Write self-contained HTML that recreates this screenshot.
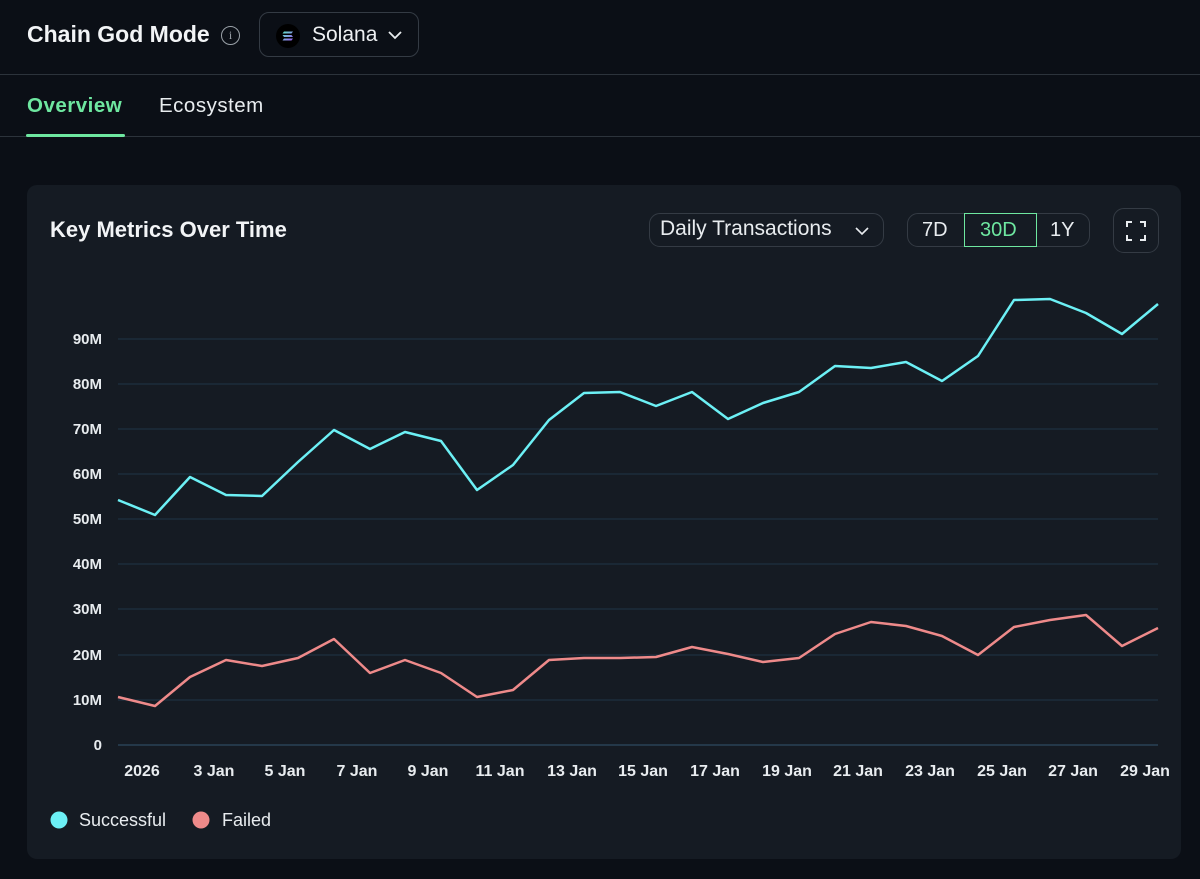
<!DOCTYPE html>
<html><head><meta charset="utf-8"><style>
*{margin:0;padding:0;box-sizing:border-box}
body{width:1200px;height:879px;background:#0b0f16;font-family:"Liberation Sans",sans-serif;color:#e8ecef;position:relative;overflow:hidden}
.abs{position:absolute}
.title{left:27px;top:21px;font-size:23px;font-weight:bold;color:#f2f4f6}
.info{left:221px;top:26px;width:19px;height:19px;border:1.5px solid #9aa1a8;border-radius:50%;color:#9aa1a8;font-size:12px;text-align:center;line-height:16px;font-family:"Liberation Serif",serif}
.sel{left:259px;top:12px;width:160px;height:45px;border:1px solid #343b44;border-radius:10px}
.hl{left:0;width:1200px;height:1px;background:#2c333b}
.tab{top:94px;font-size:20.5px;letter-spacing:.5px}
.card{left:27px;top:185px;width:1154px;height:674px;background:#151b23;border-radius:10px}
.btn{border:1px solid #343b44;border-radius:11px}
</style></head><body>
<div class="abs title">Chain God Mode</div>
<div class="abs info">i</div>
<div class="abs sel"></div>
<svg class="abs" style="left:276px;top:24px" width="24" height="24" viewBox="0 0 24 24"><circle cx="12" cy="12" r="12" fill="#000"/><defs><linearGradient id="sg" x1="0" y1="0" x2="1" y2="1"><stop offset="0" stop-color="#5fe6c8"/><stop offset="1" stop-color="#9b5cf0"/></linearGradient></defs><path d="M8 7.5h9l-1.5 2h-9zM6.5 11h9l1.5 2h-9zM8 14.5h9l-1.5 2h-9z" fill="url(#sg)"/></svg>
<div class="abs" style="left:312px;top:23px;font-size:21px;color:#eef0f2">Solana</div>
<svg class="abs" style="left:387px;top:29px" width="16" height="12"><path d="M2 3l6 6 6-6" stroke="#e8ecef" stroke-width="1.8" fill="none"/></svg>
<div class="abs hl" style="top:74px"></div>
<div class="abs tab" style="left:27px;color:#6ee7a0;font-weight:bold">Overview</div>
<div class="abs tab" style="left:159px;color:#e8ecef">Ecosystem</div>
<div class="abs hl" style="top:136px"></div>
<div class="abs" style="left:26px;top:134px;width:99px;height:3px;background:#6ee7a0;border-radius:2px"></div>
<div class="abs card"></div>
<div class="abs" style="left:50px;top:217px;font-size:22px;font-weight:bold;color:#f2f4f6">Key Metrics Over Time</div>
<div class="abs btn" style="left:649px;top:213px;width:235px;height:34px"></div>
<div class="abs" style="left:660px;top:217px;font-size:21px">Daily Transactions</div>
<svg class="abs" style="left:854px;top:225px" width="16" height="12"><path d="M2 3l6 6 6-6" stroke="#e8ecef" stroke-width="1.6" fill="none"/></svg>
<div class="abs btn" style="left:907px;top:213px;width:183px;height:34px"></div>
<div class="abs" style="left:964px;top:213px;width:73px;height:34px;border:1.5px solid #6ee7a0"></div>
<div class="abs" style="left:922px;top:219px;font-size:20px">7D</div>
<div class="abs" style="left:980px;top:219px;font-size:20px;color:#6ee7a0">30D</div>
<div class="abs" style="left:1050px;top:219px;font-size:20px">1Y</div>
<div class="abs btn" style="left:1113px;top:208px;width:46px;height:45px"></div>
<svg class="abs" style="left:1126px;top:221px" width="20" height="20"><path d="M1 6V1h5M14 1h5v5M19 14v5h-5M6 19H1v-5" stroke="#e8ecef" stroke-width="2" fill="none"/></svg>
<svg class="abs" style="left:0;top:0" width="1200" height="879">
<g stroke="#1f3447" stroke-width="1">
<line x1="118" x2="1158" y1="339" y2="339"/><line x1="118" x2="1158" y1="384" y2="384"/><line x1="118" x2="1158" y1="429" y2="429"/><line x1="118" x2="1158" y1="474" y2="474"/><line x1="118" x2="1158" y1="519" y2="519"/><line x1="118" x2="1158" y1="564" y2="564"/><line x1="118" x2="1158" y1="609" y2="609"/><line x1="118" x2="1158" y1="655" y2="655"/><line x1="118" x2="1158" y1="700" y2="700"/></g>
<line x1="118" x2="1158" y1="745" y2="745" stroke="#2a4256" stroke-width="1.5"/>
<g font-family="Liberation Sans" font-size="15" font-weight="bold" fill="#e8ecef" text-anchor="end">
<text x="102" y="344">90M</text><text x="102" y="389">80M</text><text x="102" y="434">70M</text><text x="102" y="479">60M</text><text x="102" y="524">50M</text><text x="102" y="569">40M</text><text x="102" y="614">30M</text><text x="102" y="660">20M</text><text x="102" y="705">10M</text><text x="102" y="750">0</text></g>
<g font-family="Liberation Sans" font-size="16" font-weight="bold" fill="#e8ecef" text-anchor="middle">
<text x="142" y="776">2026</text><text x="214" y="776">3 Jan</text><text x="285" y="776">5 Jan</text><text x="357" y="776">7 Jan</text><text x="428" y="776">9 Jan</text><text x="500" y="776">11 Jan</text><text x="572" y="776">13 Jan</text><text x="643" y="776">15 Jan</text><text x="715" y="776">17 Jan</text><text x="787" y="776">19 Jan</text><text x="858" y="776">21 Jan</text><text x="930" y="776">23 Jan</text><text x="1002" y="776">25 Jan</text><text x="1073" y="776">27 Jan</text><text x="1145" y="776">29 Jan</text></g>
<polyline fill="none" stroke="#6cf0f5" stroke-width="2.5" stroke-linejoin="round" points="118,500 155,515 190,477 226,495 262,496 298,462 334,430 370,449 405,432 441,441 477,490 513,465 549,420 584,393 620,392 656,406 692,392 728,419 763,403 799,392 835,366 871,368 906,362 942,381 978,356 1014,300 1050,299 1086,313 1122,334 1158,304"/>
<polyline fill="none" stroke="#ee8a8a" stroke-width="2.5" stroke-linejoin="round" points="118,697 155,706 190,677 226,660 262,666 298,658 334,639 370,673 405,660 441,673 477,697 513,690 549,660 584,658 620,658 656,657 692,647 728,654 763,662 799,658 835,634 871,622 906,626 942,636 978,655 1014,627 1050,620 1086,615 1122,646 1158,628"/>
<circle cx="59" cy="820" r="8.5" fill="#6cf0f5"/><circle cx="201" cy="820" r="8.5" fill="#ee8a8a"/>
<g font-family="Liberation Sans" font-size="18" fill="#e8ecef"><text x="79" y="826">Successful</text><text x="222" y="826">Failed</text></g>
</svg>
</body></html>
